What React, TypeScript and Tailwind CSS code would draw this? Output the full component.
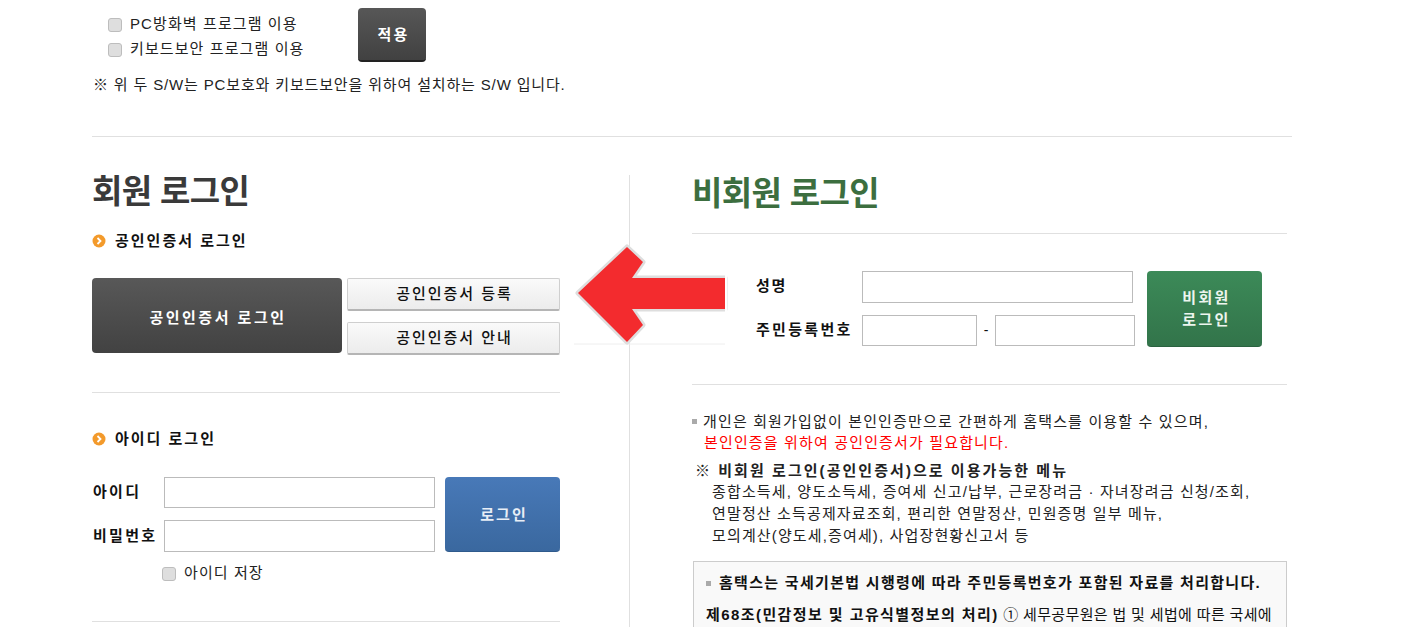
const Bullet = () => (
  <svg width="14" height="14" viewBox="0 0 14 14" className="shrink-0">
    <circle cx="7" cy="7" r="6.5" fill="#f39a2b" />
    <path d="M5.5 4 L8.5 7 L5.5 10" fill="none" stroke="#fff" strokeWidth="1.8" />
  </svg>
)

const Check = ({ label }: { label: string }) => (
  <label className="flex items-center gap-[8px] h-[25px]">
    <input type="checkbox" className="appearance-none w-[14px] h-[14px] rounded-[3px] bg-[#dedede] border border-[#bdbdbd]" />
    <span className="text-[15px] tracking-[1.1px] text-[#222]">{label}</span>
  </label>
)

const Field = ({ className }: { className: string }) => (
  <input className={`block bg-white border border-[#bbbbbb] ${className}`} />
)

const Arrow = () => (
  <svg width="160" height="112" viewBox="0 0 160 112" className="absolute left-[572px] top-[238px]">
    <path d="M2 106 H153" stroke="#eeeeee" strokeWidth="1" />
    <path
      d="M6 55 L55 9 L71 24 L60 40 L153 40 L153 71 L60 71 L71 87 L55 104 Z"
      fill="#f32b2e"
      stroke="#dedede"
      strokeWidth="5"
      strokeLinejoin="round"
      paintOrder="stroke"
    />
    <path d="M154 36 V75" stroke="#fff" strokeWidth="2" />
  </svg>
)

export default function App() {
  return (
    <div className="relative h-[627px] overflow-hidden bg-white font-['Liberation_Sans','Noto_Sans_CJK_KR',sans-serif] text-[#111]">
      <div className="w-[1200px] ml-[92px]">
        <div className="h-[137px] border-b border-[#e0e0e0]">
          <div className="flex pt-[8px] pl-[16px]">
            <div className="w-[250px] pt-[4px]">
              <Check label="PC방화벽 프로그램 이용" />
              <Check label="키보드보안 프로그램 이용" />
            </div>
            <button className="w-[68px] h-[54px] pl-[3px] pt-[2px] rounded-[4px] bg-linear-to-b from-[#575757] to-[#414141] border-b-2 border-[#222] text-white text-[15px] font-bold tracking-[2.1px]">
              적용
            </button>
          </div>
          <p className="mt-[13px] ml-[1px] text-[15px] leading-[20px] tracking-[0.85px] text-[#222] whitespace-nowrap">
            ※ 위 두 S/W는 PC보호와 키보드보안을 위하여 설치하는 S/W 입니다.
          </p>
        </div>

        <div className="flex">
          <div className="w-[468px] shrink-0 pt-[36px]">
            <h2 className="text-[33px] leading-[38px] font-bold tracking-[-0.6px] text-[#3a3a3a]">회원 로그인</h2>
            <div className="flex items-center gap-[9px] mt-[21px] h-[18px]">
              <Bullet />
              <span className="text-[15px] font-bold tracking-[2px]">공인인증서 로그인</span>
            </div>
            <div className="flex gap-[5px] mt-[28px] h-[77px] pb-0">
              <button className="w-[250px] h-[75px] pl-[2px] pt-[5px] rounded-[4px] bg-linear-to-b from-[#585858] to-[#424242] text-white text-[15px] font-bold tracking-[2.5px]">
                공인인증서 로그인
              </button>
              <div className="flex flex-col gap-[11px]">
                <button className="w-[213px] h-[33px] pl-[2px] rounded-[2px] bg-linear-to-b from-[#fafafa] to-[#ececec] border border-[#cfcfcf] border-b-2 border-b-[#b5b5b5] text-[15px] font-medium tracking-[1.95px] whitespace-nowrap">
                  공인인증서 등록
                </button>
                <button className="w-[213px] h-[33px] pl-[2px] rounded-[2px] bg-linear-to-b from-[#fafafa] to-[#ececec] border border-[#cfcfcf] border-b-2 border-b-[#b5b5b5] text-[15px] font-medium tracking-[1.95px] whitespace-nowrap">
                  공인인증서 안내
                </button>
              </div>
            </div>
            <div className="mt-[37px] border-t border-[#e0e0e0]" />
            <div className="flex items-center gap-[9px] mt-[37px] h-[18px]">
              <Bullet />
              <span className="text-[15px] font-bold tracking-[2px]">아이디 로그인</span>
            </div>
            <div className="flex mt-[28px]">
              <div className="w-[343px]">
                <div className="flex items-center h-[32px]">
                  <span className="w-[72px] pl-[1px] text-[15px] font-bold tracking-[2.3px]">아이디</span>
                  <Field className="w-[271px] h-[31px]" />
                </div>
                <div className="flex items-center h-[32px] mt-[12px]">
                  <span className="w-[72px] pl-[1px] text-[15px] font-bold tracking-[2.3px] whitespace-nowrap">비밀번호</span>
                  <Field className="w-[271px] h-[32px]" />
                </div>
              </div>
              <button className="ml-[10px] mt-[1px] w-[115px] h-[75px] pl-[3px] pt-[3px] rounded-[4px] bg-linear-to-b from-[#4879b8] to-[#3a689f] border-b border-[#2f5a8c] text-[#e8eef6] text-[15px] font-bold tracking-[2px]">
                로그인
              </button>
            </div>
            <div className="ml-[70px] mt-[9px]">
              <Check label="아이디 저장" />
            </div>
            <div className="mt-[35px] border-t border-[#e0e0e0]" />
          </div>

          <div className="w-[658px] ml-[69px] mt-[38px] pl-[62px] border-l border-[#e0e0e0]">
            <h2 className="text-[33px] leading-[38px] font-bold tracking-[-0.6px] text-[#3c6e3f]">비회원 로그인</h2>
            <div className="mt-[20px] border-t border-[#e0e0e0]" />
            <div className="flex mt-[37px] pl-[64px]">
              <div className="w-[379px]">
                <div className="flex items-center h-[32px]">
                  <span className="w-[106px] -mt-[2px] text-[15px] font-bold tracking-[1.6px]">성명</span>
                  <Field className="w-[271px] h-[32px]" />
                </div>
                <div className="flex items-center h-[32px] mt-[11px]">
                  <span className="w-[106px] shrink-0 text-[15px] font-bold tracking-[2.3px] whitespace-nowrap">주민등록번호</span>
                  <Field className="w-[115px] h-[31px]" />
                  <span className="w-[18px] text-center text-[14px]">-</span>
                  <Field className="w-[140px] h-[31px]" />
                </div>
              </div>
              <button className="ml-[12px] w-[115px] h-[76px] pl-[4px] rounded-[4px] bg-linear-to-b from-[#3c8a58] to-[#32744a] border-b border-[#2a6240] text-[#edf5ef] text-[15px] leading-[22px] font-bold tracking-[2.3px]">
                비회원
                <br />
                로그인
              </button>
            </div>
            <div className="mt-[37px] w-[595px] border-t border-[#e0e0e0]" />
            <div className="mt-[26px] text-[15px] leading-[21px] tracking-[1.15px] text-[#222] whitespace-nowrap">
              <p className="flex items-center">
                <span className="w-[5px] h-[5px] bg-[#aaaaaa] mr-[6px]" />
                개인은 회원가입없이 본인인증만으로 간편하게 홈택스를 이용할 수 있으며,
              </p>
              <p className="pl-[12px] text-[#f00]">본인인증을 위하여 공인인증서가 필요합니다.</p>
              <p className="mt-[7px] pl-[3px] font-bold tracking-[2.05px]">※ 비회원 로그인(공인인증서)으로 이용가능한 메뉴</p>
              <p className="pl-[20px] leading-[22px] tracking-[1.14px]">종합소득세, 양도소득세, 증여세 신고/납부, 근로장려금 · 자녀장려금 신청/조회,</p>
              <p className="pl-[20px] leading-[22px] tracking-[1.14px]">연말정산 소득공제자료조회, 편리한 연말정산, 민원증명 일부 메뉴,</p>
              <p className="pl-[20px] leading-[22px] tracking-[1.14px]">모의계산(양도세,증여세), 사업장현황신고서 등</p>
            </div>
            <div className="mt-[14px] w-[594px] h-[200px] ml-[1px] bg-[#f9f9f9] border border-[#cccccc] pt-[11px] pl-[12px] text-[15px] tracking-[0.35px] whitespace-nowrap">
              <p className="flex items-center leading-[20px] font-bold tracking-[1.3px]">
                <span className="w-[5px] h-[5px] bg-[#aaaaaa] mr-[8px]" />
                홈택스는 국세기본법 시행령에 따라 주민등록번호가 포함된 자료를 처리합니다.
              </p>
              <p className="mt-[12px] leading-[20px]">
                <span className="font-bold tracking-[1.42px]">제68조(민감정보 및 고유식별정보의 처리)</span> ① 세무공무원은 법 및 세법에 따른 국세에
              </p>
            </div>
          </div>
        </div>
      </div>
      <Arrow />
    </div>
  )
}
